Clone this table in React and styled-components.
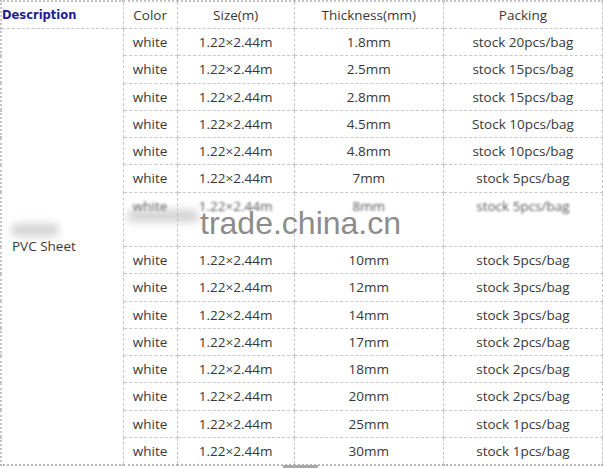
import React from 'react'
import styled, { createGlobalStyle } from 'styled-components'

const GlobalStyle = createGlobalStyle`
  html, body {
    margin: 0;
    padding: 0;
    background: #fff;
    overflow: hidden;
  }
`

const Page = styled.div`
  position: relative;
  width: 603px;
  height: 468px;
  font-family: "Open Sans", "Noto Sans", sans-serif;
`

const Table = styled.table`
  width: 603px;
  table-layout: fixed;
  border-collapse: collapse;
  border-top: 2px dotted #c4c4c4;
  border-left: 2px dotted #c4c4c4;
  border-bottom: 2px dotted #b8b8b8;
`

const Cell = styled.td`
  border-right: 1px dashed #c8c8c8;
  border-bottom: 1px dashed #c8c8c8;
  padding: 0;
  font-size: 13.5px;
  color: #383838;
  text-align: ${p => (p.$left ? 'left' : 'center')};
  padding-left: ${p => (p.$left ? '10px' : '0')};
  white-space: nowrap;
  vertical-align: ${p => (p.$top ? 'top' : 'middle')};
`

const HeadCell = styled(Cell)`
  height: 26px;
`

const Desc = styled.td`
  border-right: 1px dashed #c8c8c8;
  border-bottom: 1px dashed #c8c8c8;
  padding: 0 0 1px 0;
  font-family: "DejaVu Sans", Verdana, sans-serif;
  font-weight: bold;
  font-size: 11.5px;
  color: #1c1c94;
  text-align: left;
`

const Row = styled.tr`
  height: ${p => p.$h}px;
`

const Blurred = styled.div`
  height: 27px;
  line-height: 27px;
  filter: blur(1.2px);
  opacity: 0.85;
`

const Watermark = styled.div`
  position: absolute;
  left: 200px;
  top: 205px;
  font-family: "Liberation Sans", Arial, sans-serif;
  font-size: 32px;
  color: #8c8c8c;
  pointer-events: none;
`

const Smudge = styled.div`
  position: absolute;
  background: #b4b4b4;
  filter: blur(4px);
  opacity: 0.6;
`

const Tab = styled.div`
  position: absolute;
  left: 283px;
  top: 465px;
  width: 35px;
  height: 3px;
  background: #a8a8a8;
`

const sizes = [
  ['1.8mm', 'stock 20pcs/bag'],
  ['2.5mm', 'stock 15pcs/bag'],
  ['2.8mm', 'stock 15pcs/bag'],
  ['4.5mm', 'Stock 10pcs/bag'],
  ['4.8mm', 'stock 10pcs/bag'],
  ['7mm', 'stock 5pcs/bag'],
  ['8mm', 'stock 5pcs/bag', true],
  ['10mm', 'stock 5pcs/bag'],
  ['12mm', 'stock 3pcs/bag'],
  ['14mm', 'stock 3pcs/bag'],
  ['17mm', 'stock 2pcs/bag'],
  ['18mm', 'stock 2pcs/bag'],
  ['20mm', 'stock 2pcs/bag'],
  ['25mm', 'stock 1pcs/bag'],
  ['30mm', 'stock 1pcs/bag'],
]

const App = () => {
  return (
    <Page>
      <GlobalStyle />
      <Table>
        <colgroup>
          <col style={{ width: 122 }} />
          <col style={{ width: 54 }} />
          <col style={{ width: 117 }} />
          <col style={{ width: 149 }} />
          <col style={{ width: 159 }} />
        </colgroup>
        <tbody>
          <tr>
            <Desc>Description</Desc>
            <HeadCell>Color</HeadCell>
            <HeadCell>Size(m)</HeadCell>
            <HeadCell>Thickness(mm)</HeadCell>
            <HeadCell>Packing</HeadCell>
          </tr>
          {sizes.map(([thick, pack, hidden], i) => (
            <Row key={thick} $h={hidden ? 54.5 : 27.25}>
              {i === 0 && (
                <Cell $left rowSpan={sizes.length}>
                  PVC Sheet
                </Cell>
              )}
              {hidden ? (
                <>
                  <Cell $top><Blurred>white</Blurred></Cell>
                  <Cell $top><Blurred>1.22×2.44m</Blurred></Cell>
                  <Cell $top><Blurred>{thick}</Blurred></Cell>
                  <Cell $top><Blurred>{pack}</Blurred></Cell>
                </>
              ) : (
                <>
                  <Cell>white</Cell>
                  <Cell>1.22×2.44m</Cell>
                  <Cell>{thick}</Cell>
                  <Cell>{pack}</Cell>
                </>
              )}
            </Row>
          ))}
        </tbody>
      </Table>
      <Smudge style={{ left: 12, top: 224, width: 46, height: 12 }} />
      <Smudge style={{ left: 128, top: 210, width: 70, height: 12 }} />
      <Watermark>trade.china.cn</Watermark>
      <Tab />
    </Page>
  )
}

export default App
